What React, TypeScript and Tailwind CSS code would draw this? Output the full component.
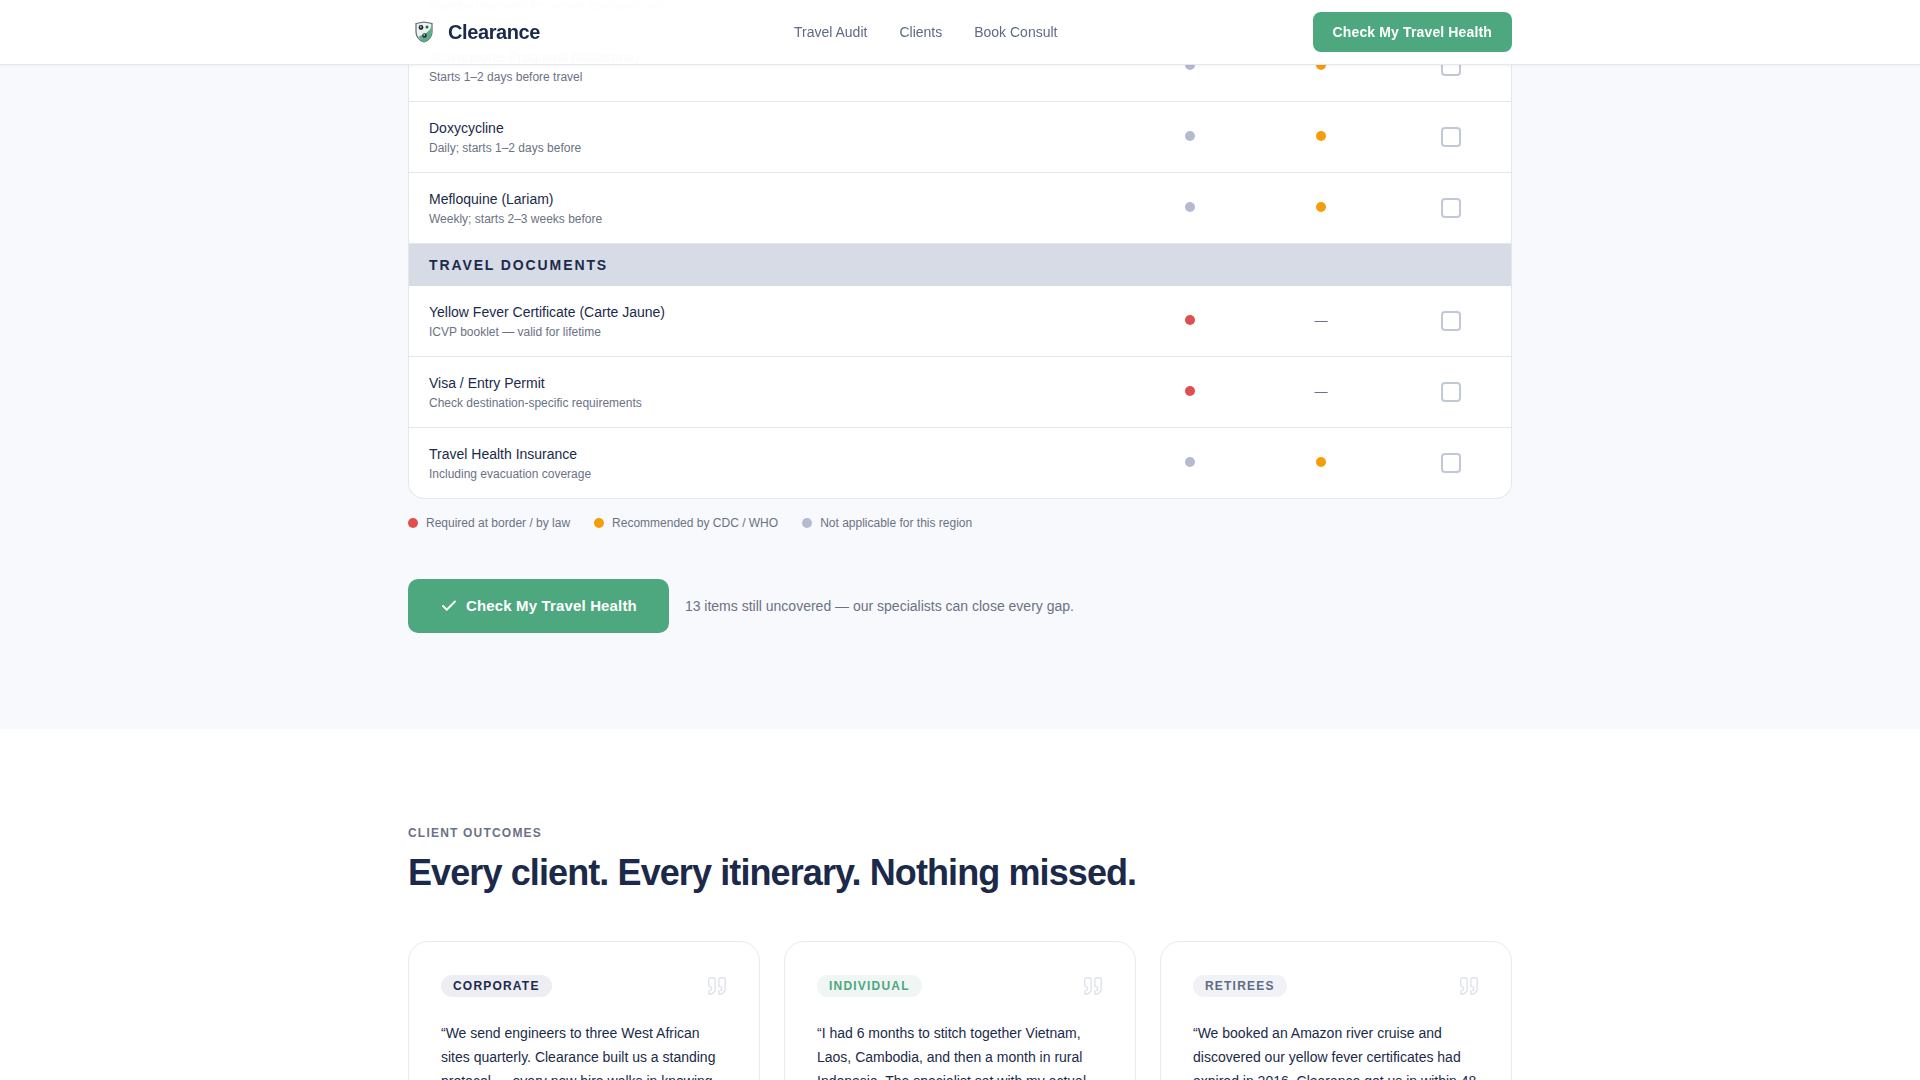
import { Check, Quote } from "lucide-react";

const Dot = ({ c }: { c: string }) => <span className={`block h-2.5 w-2.5 rounded-full ${c}`} />;
const RED = "bg-[#e04f4f]";
const AMBER = "bg-[#f59e0b]";
const GREY = "bg-[#b4bbd0]";

type R = { name: string; sub: string; a: string; b: string | null };

function Row({ r, end }: { r: R; end?: boolean }) {
  return (
    <div
      className={`grid grid-cols-[1fr_124px_138px_121px] items-center border-[#e5e7ed] ${end ? "h-[70px]" : "h-[71px] border-b"}`}
    >
      <div className="pl-5">
        <div className="text-sm leading-5 text-[#1b2a4a]">{r.name}</div>
        <div className="mt-[2.5px] text-xs leading-4 text-[#6b7285]">{r.sub}</div>
      </div>
      <div className="-mt-[2px] flex justify-center"><Dot c={r.a} /></div>
      <div className="-mt-[2px] flex justify-center">
        {r.b ? <Dot c={r.b} /> : <span className="mt-px text-[13px] leading-5 text-[#6b7285]">—</span>}
      </div>
      <div className="flex justify-center">
        <span className="block h-5 w-5 rounded-[4px] border-2 border-[#c3c8d6] bg-white" />
      </div>
    </div>
  );
}

function Shield() {
  return (
    <svg width="20" height="22" viewBox="0 0 20 22" className="block">
      <path d="M2 2.5 L10 1 L18 2.5 L18 11 C18 16 14 19.5 10 21 C6 19.5 2 16 2 11 Z" fill="#eef2ef" stroke="#5a6b72" strokeWidth="1.2" />
      <path d="M10 21 C14 19.5 18 16 18 11 L18 5 C15 11 10 14 4.5 15.5 C6 18 8 20 10 21 Z" fill="#5fae8a" />
      <circle cx="7" cy="6.5" r="2.4" fill="#1f2d40" />
      <circle cx="13" cy="6" r="1.5" fill="#3d5560" />
      <circle cx="10.5" cy="14.5" r="2.3" fill="#1f2d40" />
      <circle cx="6.8" cy="6" r="0.8" fill="#ffffff" />
      <circle cx="10.2" cy="14" r="0.8" fill="#ffffff" />
    </svg>
  );
}

function Card({ tag, tagCls, lines }: { tag: string; tagCls: string; lines: string }) {
  return (
    <div className="h-[300px] rounded-[20px] border border-[#e8eaf0] bg-white px-8 pt-[33px]">
      <div className="flex items-center justify-between">
        <span className={`rounded-full px-3 py-[3px] text-xs font-bold leading-4 tracking-[0.1em] ${tagCls}`}>{tag}</span>
        <Quote size={22} strokeWidth={1.5} className="-mr-px text-[#dfe2e9]" />
      </div>
      <p className="mt-6 text-sm leading-[24px] text-[#1b2a4a]">{lines}</p>
    </div>
  );
}

export default function App() {
  return (
    <div className="relative h-[1080px] overflow-hidden bg-white font-['Liberation_Sans',Arial,sans-serif]">
      <nav className="absolute inset-x-0 top-0 z-10 h-[65px] border-b border-[#e5e7ed] bg-white/95 shadow-[0_1px_3px_rgba(26,39,68,0.06)] backdrop-blur-lg">
        <div className="mx-auto flex h-16 w-[1104px] items-center">
          <div className="flex w-[386px] items-center gap-[14px] pl-[6px]">
            <Shield />
            <span className="text-xl font-bold tracking-[-0.02em] text-[#1b2a4a]">Clearance</span>
          </div>
          <div className="flex gap-8 text-sm text-[#5f6b85]">
            <span>Travel Audit</span>
            <span>Clients</span>
            <span>Book Consult</span>
          </div>
          <button className="ml-auto h-10 rounded-lg bg-[#4da77f] px-5 text-sm font-semibold tracking-[0.01em] text-white">
            Check My Travel Health
          </button>
        </div>
      </nav>

      <section className="-mt-[40px] h-[769px] bg-[#f8f9fc]">
        <div className="mx-auto w-[1104px]">
          <div className="overflow-hidden rounded-b-2xl border border-t-0 border-[#e5e7ed] bg-white">
            <Row r={{ name: "Artemether-Lumefantrine", sub: "Standby treatment for remote itineraries only", a: GREY, b: AMBER }} />
            <Row r={{ name: "Atovaquone-Proguanil (Malarone)", sub: "Starts 1–2 days before travel", a: GREY, b: AMBER }} />
            <Row r={{ name: "Doxycycline", sub: "Daily; starts 1–2 days before", a: GREY, b: AMBER }} />
            <Row r={{ name: "Mefloquine (Lariam)", sub: "Weekly; starts 2–3 weeks before", a: GREY, b: AMBER }} />
            <div className="flex h-[42px] items-center bg-[#d6dbe6] pb-px pl-5 text-sm font-bold tracking-[0.135em] text-[#1b2a4a]">
              TRAVEL DOCUMENTS
            </div>
            <Row r={{ name: "Yellow Fever Certificate (Carte Jaune)", sub: "ICVP booklet — valid for lifetime", a: RED, b: null }} />
            <Row r={{ name: "Visa / Entry Permit", sub: "Check destination-specific requirements", a: RED, b: null }} />
            <Row r={{ name: "Travel Health Insurance", sub: "Including evacuation coverage", a: GREY, b: AMBER }} end />
          </div>

          <div className="mt-4 flex items-center gap-6 text-xs leading-4 text-[#6b7285]">
            <div className="flex items-center gap-2"><Dot c={RED} />Required at border / by law</div>
            <div className="flex items-center gap-2"><Dot c={AMBER} />Recommended by CDC / WHO</div>
            <div className="flex items-center gap-2"><Dot c={GREY} />Not applicable for this region</div>
          </div>

          <div className="mt-12 flex items-center gap-4">
            <button className="flex h-[54px] items-center gap-2 rounded-[10px] bg-[#4da77f] px-8 text-[15px] font-bold tracking-[0.01em] text-white">
              <Check size={18} strokeWidth={2.5} />
              Check My Travel Health
            </button>
            <span className="text-sm text-[#6b7285]">13 items still uncovered — our specialists can close every gap.</span>
          </div>
        </div>
      </section>

      <section className="bg-white pt-24">
        <div className="mx-auto w-[1104px]">
          <div className="text-xs font-bold leading-4 tracking-[0.1em] text-[#6b7285]">CLIENT OUTCOMES</div>
          <h2 className="mt-3 text-4xl font-bold tracking-[-0.025em] text-[#1b2a4a]">Every client. Every itinerary. Nothing missed.</h2>
          <div className="mt-12 grid grid-cols-3 gap-6">
            <Card
              tag="CORPORATE"
              tagCls="bg-[#eceef3] text-[#1b2a4a]"
              lines="“We send engineers to three West African sites quarterly. Clearance built us a standing protocol — every new hire walks in knowing exactly what they need before departure.”"
            />
            <Card
              tag="INDIVIDUAL"
              tagCls="bg-[#eff6f3] text-[#4da77f]"
              lines="“I had 6 months to stitch together Vietnam, Laos, Cambodia, and then a month in rural Indonesia. The specialist sat with my actual route and built a plan around it.”"
            />
            <Card
              tag="RETIREES"
              tagCls="bg-[#f1f2f6] text-[#5f6b85]"
              lines="“We booked an Amazon river cruise and discovered our yellow fever certificates had expired in 2016. Clearance got us in within 48 hours and sorted the rest.”"
            />
          </div>
        </div>
      </section>
    </div>
  );
}
